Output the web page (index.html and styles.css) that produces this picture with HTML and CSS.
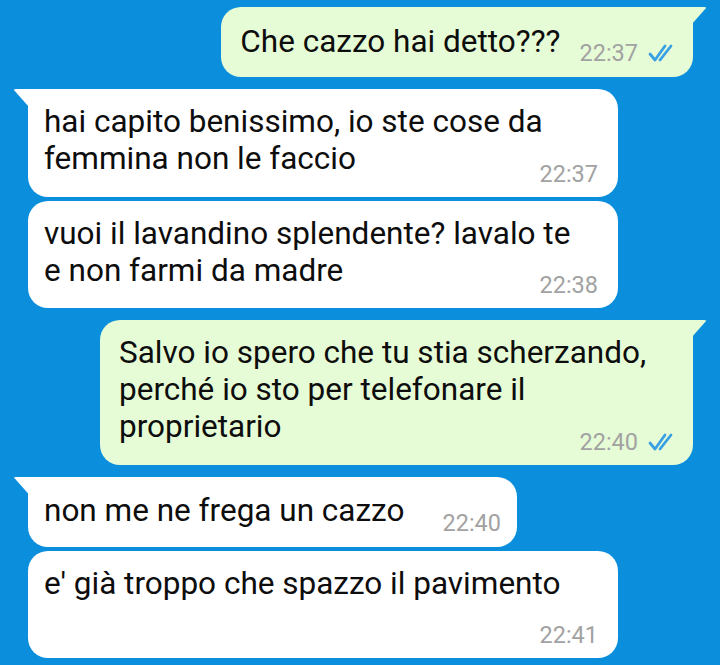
FILE: index.html
```html
<!DOCTYPE html>
<html lang="it">
<head>
    <meta charset="UTF-8">
    <meta name="viewport" content="width=device-width, initial-scale=1.0">
    <title>Chat</title>
    <link rel="stylesheet" href="styles.css">
</head>
<body>
    <div class="chat">
        <div class="bubble out tail inline">
            <p class="text">Che cazzo hai detto???</p>
            <div class="meta">22:37 <svg class="ticks" viewBox="0 0 29 18"><path d="M2 10 L7 16 L17 2"/><path d="M12 16 L23 2"/></svg></div>
        </div>

        <div class="bubble in tail first">
            <p class="text">hai capito benissimo, io ste cose da<br>femmina non le faccio</p>
            <div class="meta">22:37</div>
        </div>
        <div class="bubble in">
            <p class="text">vuoi il lavandino splendente? lavalo te<br>e non farmi da madre</p>
            <div class="meta">22:38</div>
        </div>

        <div class="bubble out tail first">
            <p class="text">Salvo io spero che tu stia scherzando,<br>perché io sto per telefonare il<br>proprietario</p>
            <div class="meta">22:40 <svg class="ticks" viewBox="0 0 29 18"><path d="M2 10 L7 16 L17 2"/><path d="M12 16 L23 2"/></svg></div>
        </div>

        <div class="bubble in tail first inline">
            <p class="text">non me ne frega un cazzo</p>
            <div class="meta">22:40</div>
        </div>
        <div class="bubble in own-line">
            <p class="text">e' già troppo che spazzo il pavimento</p>
            <div class="meta">22:41</div>
        </div>
    </div>
</body>
</html>
```

FILE: styles.css
```css
html, body {
    margin: 0;
    padding: 0;
}

body {
    background-color: #0b8fdc;
    font-family: Roboto, "Noto Sans", sans-serif;
    color: #0d0d0d;
    width: 720px;
    height: 665px;
    overflow: hidden;
}

.chat {
    display: flex;
    flex-direction: column;
    gap: 4px;
    padding-top: 7px;
}

.bubble {
    position: relative;
    box-sizing: border-box;
    border-radius: 20px;
    padding: 14px 20px 11px 16px;
}

.bubble.first {
    margin-top: 8px;
}

.bubble.in {
    align-self: flex-start;
    margin-left: 28px;
    width: 590px;
    background-color: #fff;
}

.bubble.out {
    align-self: flex-end;
    margin-right: 27px;
    background-color: #e6fcd6;
    padding-right: 16px;
    padding-left: 19px;
}

.bubble.out.first {
    width: 593px;
}

.text {
    margin: 0;
    font-size: 31.5px;
    line-height: 37px;
}

.meta {
    display: flex;
    justify-content: flex-end;
    align-items: center;
    gap: 10px;
    margin-top: -15.5px;
    font-size: 23.5px;
    line-height: 24px;
    color: #a2a2a2;
}

.ticks {
    width: 29px;
    height: 18px;
    fill: none;
    stroke: #3aa0e4;
    stroke-width: 2.8;
    stroke-linecap: round;
    stroke-linejoin: round;
}

/* single line bubbles: time sits on the same row */
.bubble.inline {
    display: flex;
    align-items: flex-end;
    gap: 19px;
    padding-top: 15.5px;
    padding-bottom: 17.5px;
    width: auto;
}

.bubble.in.inline {
    gap: 38px;
    padding-right: 16px;
}

.bubble.inline .meta {
    margin-top: 0;
    margin-bottom: -5.5px;
}

.bubble.own-line .meta {
    margin-top: 21.5px;
}

/* little tails on the first bubble of a group */
.bubble.tail.in {
    border-top-left-radius: 0;
}

.bubble.tail.out {
    border-top-right-radius: 0;
}

.bubble.tail::before {
    content: "";
    position: absolute;
    top: 0;
    width: 16px;
    height: 18px;
}

.bubble.tail.in::before {
    left: -15px;
    background-color: #fff;
    clip-path: polygon(0 0, 100% 0, 100% 100%);
    border-top-left-radius: 3px;
}

.bubble.tail.out::before {
    right: -14px;
    background-color: #e6fcd6;
    clip-path: polygon(0 0, 100% 0, 0 100%);
    border-top-right-radius: 3px;
}
```
